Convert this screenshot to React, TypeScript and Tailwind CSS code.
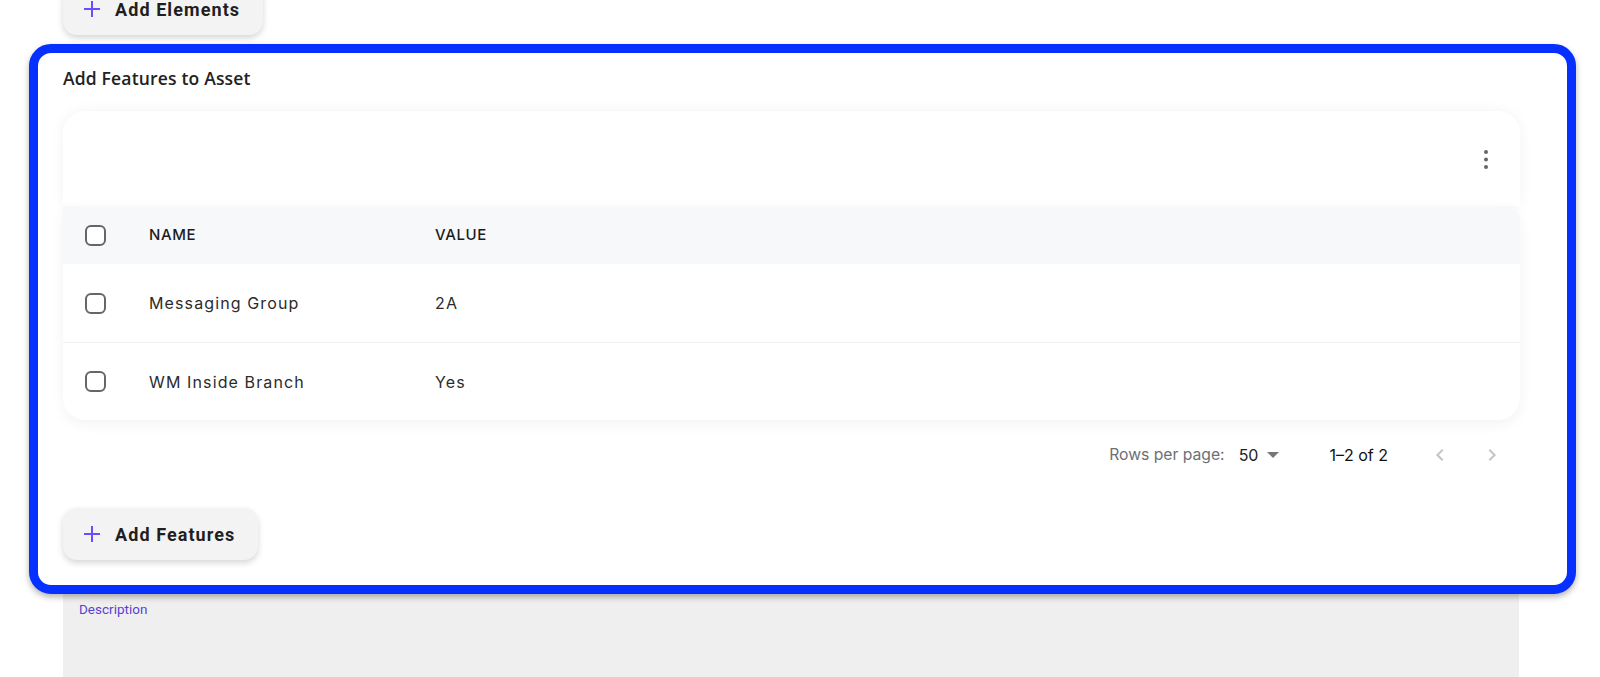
import React from 'react';

const rows = [
  { name: 'Messaging Group', value: '2A' },
  { name: 'WM Inside Branch', value: 'Yes' },
];

function Checkbox() {
  return <span className="block w-[21px] h-[21px] rounded-[6px] border-2 border-[#666] bg-white" />;
}

function PlusIcon() {
  return (
    <svg width="18" height="18" viewBox="0 0 18 18" fill="none">
      <path d="M9 1v16M1 9h16" stroke="#6d4cff" strokeWidth="2" />
    </svg>
  );
}

function AddButton({ label, className = '' }: { label: string; className?: string }) {
  return (
    <button
      type="button"
      className={`flex items-center h-[52px] pl-[20px] pr-[21px] gap-[14px] bg-[#f3f3f3] rounded-[14px] shadow-[0_3px_6px_rgba(0,0,0,0.16)] ${className}`}
    >
      <PlusIcon />
      <span className="text-[18px] font-bold tracking-[0.06em] text-[#1f1f1f] font-['Roboto',sans-serif] whitespace-nowrap">{label}</span>
    </button>
  );
}

function Chevron({ dir }: { dir: 'left' | 'right' }) {
  return (
    <svg width="24" height="24" viewBox="0 0 24 24" className="block">
      <path
        d={dir === 'left' ? 'M15.41 16.59 10.83 12l4.58-4.59L14 6l-6 6 6 6z' : 'M8.59 16.59 13.17 12 8.59 7.41 10 6l6 6-6 6z'}
        fill="#c4c4c4"
      />
    </svg>
  );
}

export default function App() {
  return (
    <div className="w-[1600px] h-[677px] overflow-hidden bg-white font-['Inter',sans-serif]">
      <div className="w-[1519px] pl-[63px] flex flex-col">
        <AddButton label="Add Elements" className="mt-[-17px] w-[200px]" />

        {/* highlighted section */}
        <section className="relative z-10 mt-[9px] ml-[-34px] mr-[-57px] border-[9px] border-[#0530ff] rounded-[22px] bg-white shadow-[0_3px_6px_rgba(0,0,0,0.3)] pl-[25px] pr-[47px] pt-[13px] pb-[25px]">
          <h2 className="text-[17.5px] leading-[24px] font-semibold text-[#222] font-['Open_Sans',sans-serif] tracking-[0.01em]">
            Add Features to Asset
          </h2>

          <div className="mt-[21px] flex flex-col">
            {/* toolbar */}
            <div className="h-[95px] bg-white rounded-t-[22px] shadow-[0_0_14px_rgba(0,0,0,0.05)] flex items-center justify-end pr-[22px]">
              <svg width="24" height="24" viewBox="0 0 24 24">
                <circle cx="12" cy="5" r="2" fill="#666" />
                <circle cx="12" cy="12.5" r="2" fill="#666" />
                <circle cx="12" cy="20" r="2" fill="#666" />
              </svg>
            </div>

            {/* grid */}
            <div className="bg-white rounded-b-[22px] rounded-tr-[16px] shadow-[0_4px_14px_rgba(0,0,0,0.05)] overflow-hidden">
              <div className="h-[58px] bg-[#f7f8fa] flex items-center pl-[22px]">
                <Checkbox />
                <span className="ml-[43px] w-[286px] text-[15px] font-medium tracking-[0.04em] text-[#1c1c1c]">NAME</span>
                <span className="text-[15px] font-medium tracking-[0.04em] text-[#1c1c1c]">VALUE</span>
              </div>
              {rows.map((r, i) => (
                <div
                  key={r.name}
                  className={`h-[78px] flex items-center pl-[22px] ${i > 0 ? 'border-t border-[#f0f0f0]' : ''}`}
                >
                  <Checkbox />
                  <span className="ml-[43px] w-[286px] text-[16px] tracking-[0.07em] text-[#2b2b2b]">{r.name}</span>
                  <span className="text-[16px] tracking-[0.07em] text-[#2b2b2b]">{r.value}</span>
                </div>
              ))}
            </div>
          </div>

          {/* pagination */}
          <div className="mt-[9px] h-[52px] flex items-center justify-end pr-[16px] text-[16px]">
            <span className="text-[15.7px] text-[#6b6f76]">Rows per page:</span>
            <span className="ml-[14px] text-[#222]">50</span>
            <svg width="12" height="6" viewBox="0 0 12 6" className="ml-[9px]">
              <path d="M0 0h12L6 6z" fill="#777" />
            </svg>
            <span className="ml-[50px] text-[#111]">1–2 of 2</span>
            <span className="ml-[40px]"><Chevron dir="left" /></span>
            <span className="ml-[28px]"><Chevron dir="right" /></span>
          </div>

          <AddButton label="Add Features" className="mt-[27px] w-[195px]" />
        </section>

        {/* description field */}
        <div className="h-[200px] bg-[#efefef] pl-[16px] pt-[2px]">
          <span className="text-[13.5px] text-[#5b3fd4] font-['Roboto',sans-serif]">Description</span>
        </div>
      </div>
    </div>
  );
}
